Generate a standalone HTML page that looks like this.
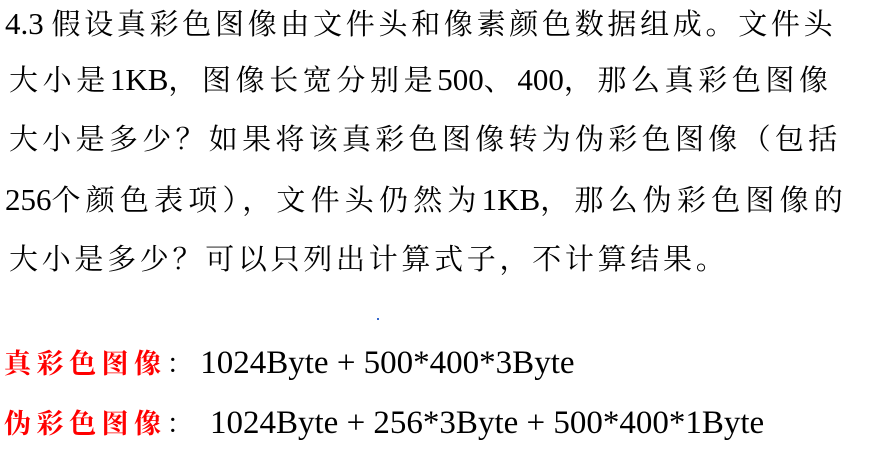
<html><head><style>
body{margin:0;width:870px;height:462px;background:#fff;overflow:hidden;position:relative;font-family:"Liberation Serif","Noto Serif CJK SC",serif;}
.l{position:absolute;white-space:nowrap;font-size:29px;line-height:34px;color:#000;letter-spacing:3.7px}
.r{color:#f00;font-weight:bold;font-family:"Noto Serif CJK SC",serif;letter-spacing:5.5px;font-size:27px}
.n{font-size:33px;letter-spacing:0}
.d{font-size:31px;letter-spacing:0}
</style></head><body>
<div class="l" style="left:5px;top:7px"><span class="d">4.3 </span>假设真彩色图像由文件头和像素颜色数据组成。文件头</div>
<div class="l" style="left:9px;top:63px;letter-spacing:4.6px">大小是<span class="d">1KB</span>，图像长宽分别是<span class="d">500</span>、<span class="d">400</span>，那么真彩色图像</div>
<div class="l" style="left:9px;top:123px;letter-spacing:4.3px">大小是多少？如果将该真彩色图像转为伪彩色图像（包括</div>
<div class="l" style="left:5px;top:183px;letter-spacing:5.2px"><span class="d">256</span>个颜色表项），文件头仍然为<span class="d">1KB</span>，那么伪彩色图像的</div>
<div class="l" style="left:9px;top:243px">大小是多少？可以只列出计算式子，不计算结果。</div>
<div style="position:absolute;left:377px;top:318px;width:2px;height:2px;background:#36c"></div>
<div class="l" style="left:4px;top:345px;letter-spacing:0;font-size:27px"><span class="r">真彩色图像</span>：&nbsp;<span class="n">1024Byte + 500*400*3Byte</span></div>
<div class="l" style="left:4px;top:405px;letter-spacing:0;font-size:27px"><span class="r">伪彩色图像</span>：&nbsp;&nbsp;<span class="n" style="margin-left:3px">1024Byte + 256*3Byte + 500*400*1Byte</span></div>
</body></html>
